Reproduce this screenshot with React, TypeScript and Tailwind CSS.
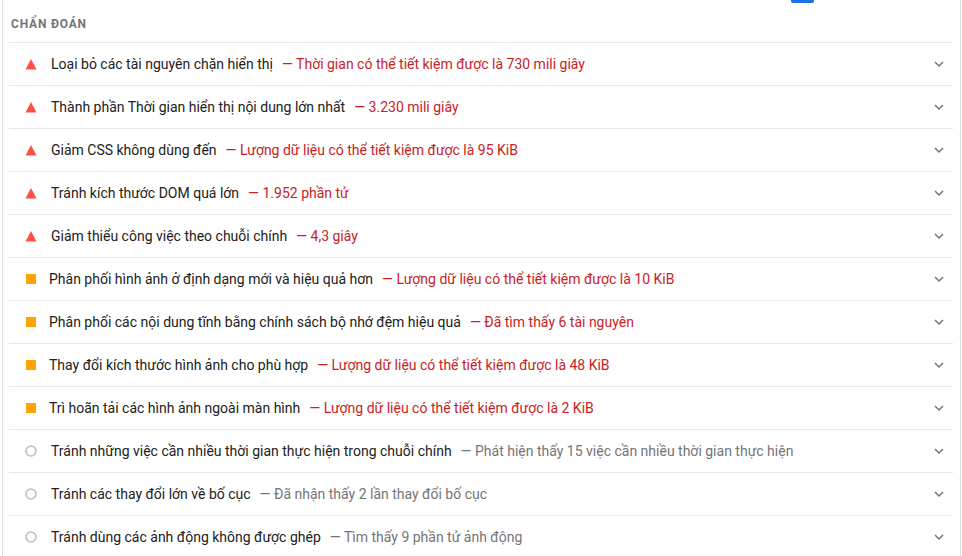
import React from "react";

type Kind = "fail" | "average" | "info";
const rows: { kind: Kind; title: string; detail: string }[] = [
  { kind: "fail", title: "Loại bỏ các tài nguyên chặn hiển thị", detail: "Thời gian có thể tiết kiệm được là 730 mili giây" },
  { kind: "fail", title: "Thành phần Thời gian hiển thị nội dung lớn nhất", detail: "3.230 mili giây" },
  { kind: "fail", title: "Giảm CSS không dùng đến", detail: "Lượng dữ liệu có thể tiết kiệm được là 95 KiB" },
  { kind: "fail", title: "Tránh kích thước DOM quá lớn", detail: "1.952 phần tử" },
  { kind: "fail", title: "Giảm thiểu công việc theo chuỗi chính", detail: "4,3 giây" },
  { kind: "average", title: "Phân phối hình ảnh ở định dạng mới và hiệu quả hơn", detail: "Lượng dữ liệu có thể tiết kiệm được là 10 KiB" },
  { kind: "average", title: "Phân phối các nội dung tĩnh bằng chính sách bộ nhớ đệm hiệu quả", detail: "Đã tìm thấy 6 tài nguyên" },
  { kind: "average", title: "Thay đổi kích thước hình ảnh cho phù hợp", detail: "Lượng dữ liệu có thể tiết kiệm được là 48 KiB" },
  { kind: "average", title: "Trì hoãn tải các hình ảnh ngoài màn hình", detail: "Lượng dữ liệu có thể tiết kiệm được là 2 KiB" },
  { kind: "info", title: "Tránh những việc cần nhiều thời gian thực hiện trong chuỗi chính", detail: "Phát hiện thấy 15 việc cần nhiều thời gian thực hiện" },
  { kind: "info", title: "Tránh các thay đổi lớn về bố cục", detail: "Đã nhận thấy 2 lần thay đổi bố cục" },
  { kind: "info", title: "Tránh dùng các ảnh động không được ghép", detail: "Tìm thấy 9 phần tử ảnh động" },
];

function Icon({ kind }: { kind: Kind }) {
  if (kind === "fail")
    return (
      <svg width="12" height="12" viewBox="0 0 12 12" className="shrink-0">
        <polygon points="6,1 11.5,11.5 0.5,11.5" fill="#ff4e42" />
      </svg>
    );
  if (kind === "average")
    return <div className="w-[10px] h-[10px] bg-[#ffa400] shrink-0 ml-[1px] mr-[1px]" />;
  return (
    <svg width="12" height="12" viewBox="0 0 12 12" className="shrink-0">
      <circle cx="6" cy="6" r="5" fill="none" stroke="#bdbdbd" strokeWidth="1.6" />
    </svg>
  );
}

export default function App() {
  return (
    <div
      className="relative w-[962px] h-[556px] overflow-hidden bg-white"
      style={{ fontFamily: "Roboto, 'Noto Sans', sans-serif" }}
    >
      <div className="absolute left-[791px] top-0 w-[23px] h-[3px] rounded-b-[2px] bg-[#1a73e8]" />
      <div className="ml-[2px] mr-[1px] h-full border-l border-r border-[#e0e0e0] pl-[6px] pr-[7px]">
        <div className="h-[42px] pt-[15px] pl-[2px] text-[12px] font-bold tracking-[0.8px] text-[#757575] leading-[18px]">
          CHẨN ĐOÁN
        </div>
        {rows.map((r, i) => (
          <div
            key={i}
            className="h-[43px] border-t border-[#e8e8e8] flex items-center pl-[16px] pr-[9px] text-[14px] leading-[20px]"
          >
            <Icon kind={r.kind} />
            <span className={`text-[#212121] ${r.kind === "average" ? "ml-[12px]" : "ml-[14px]"}`}>{r.title}</span>
            <span
              className={`ml-[9px] ${r.kind === "info" ? "text-[#757575]" : "text-[#c7221f]"}`}
            >
              — {r.detail}
            </span>
            <div className="flex-1" />
            <svg width="10" height="7" viewBox="0 0 10 7" className="shrink-0">
              <polyline points="1,1 5,5 9,1" fill="none" stroke="#757575" strokeWidth="1.5" />
            </svg>
          </div>
        ))}
      </div>
    </div>
  );
}
